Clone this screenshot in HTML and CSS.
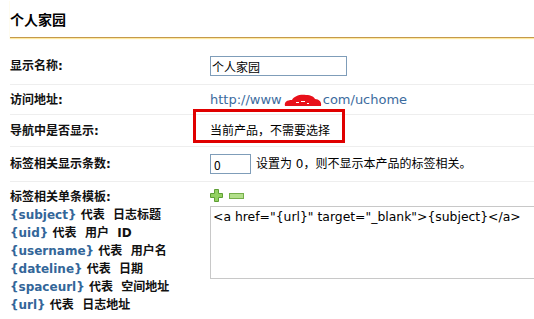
FILE: index.html
```html
<!DOCTYPE html>
<html lang="zh-CN">
<head>
<meta charset="utf-8">
<title>个人家园</title>
<link rel="stylesheet" href="styles.css">
</head>
<body>
<div class="page">
  <h1 class="title">个人家园</h1>
  <div class="form">
    <div class="row row-name">
      <div class="label">显示名称:</div>
      <div class="value"><input class="text name-input" type="text" value="个人家园"></div>
    </div>
    <div class="row row-url">
      <div class="label">访问地址:</div>
      <div class="value"><a class="link" href="#">http://www<svg class="blot" width="38" height="14" viewBox="0 0 38 14"><path d="M1 13 C0 9 3 7 8 7 C10 3 16 1 22 2 C27 2 30 4 31 6 C35 6 38 9 37 13 Z" fill="#e8101a"/><rect x="12" y="9" width="3" height="1" fill="#fff"/><rect x="17" y="8" width="4" height="1" fill="#fff"/><rect x="23" y="10" width="2" height="1" fill="#fff"/></svg>com/uchome</a></div>
    </div>
    <div class="row row-nav">
      <div class="label">导航中是否显示:</div>
      <div class="value"><span class="hl">当前产品，不需要选择</span></div>
    </div>
    <div class="row row-count">
      <div class="label">标签相关显示条数:</div>
      <div class="value"><input class="text count-input" type="text" value="0"><span class="hint">设置为 0，则不显示本产品的标签相关。</span></div>
    </div>
    <div class="row row-tpl">
      <div class="label">
        <div>标签相关单条模板:</div>
        <div><span class="var">{subject}</span> 代表 &nbsp;日志标题</div>
        <div><span class="var">{uid}</span> 代表 &nbsp;用户 &nbsp;ID</div>
        <div><span class="var">{username}</span> 代表 &nbsp;用户名</div>
        <div><span class="var">{dateline}</span> 代表 &nbsp;日期</div>
        <div><span class="var">{spaceurl}</span> 代表 &nbsp;空间地址</div>
        <div><span class="var">{url}</span> 代表 &nbsp;日志地址</div>
      </div>
      <div class="value tpl-value">
        <div class="tools">
          <svg class="icon" width="13" height="13" viewBox="0 0 13 13"><polygon points="4.5,0.5 8.5,0.5 8.5,4.5 12.5,4.5 12.5,8.5 8.5,8.5 8.5,12.5 4.5,12.5 4.5,8.5 0.5,8.5 0.5,4.5 4.5,4.5" fill="#93d160" stroke="#5e9e35"/></svg>
          <svg class="icon" width="15" height="6" viewBox="0 0 15 6"><rect x="0.5" y="0.5" width="14" height="5" fill="#b2df8a" stroke="#75ae4a"/></svg>
        </div>
        <textarea class="tpl">&lt;a href="{url}" target="_blank"&gt;{subject}&lt;/a&gt;</textarea>
      </div>
    </div>
  </div>
</div>
</body>
</html>
```

FILE: styles.css
```css
html, body {
  margin: 0;
  padding: 0;
  background: #fff;
  overflow: hidden;
}

body {
  font-family: "DejaVu Sans", "Noto Sans CJK SC", sans-serif;
  font-size: 12px;
  color: #000;
}

.page {
  margin-left: 10px;
}

.title {
  margin: 0;
  padding: 11px 0 9px;
  font-family: "Noto Sans CJK SC", sans-serif;
  font-size: 14px;
  line-height: 17px;
  font-weight: bold;
  border-bottom: 1px solid #c49a4c;
  box-shadow: 0 1px 1px #ffe9a0;
}

.form {
  margin-top: 10px;
}

.row {
  display: grid;
  grid-template-columns: 200px 1fr;
  align-items: center;
  line-height: 18px;
  border-bottom: 1px solid #eeeeee;
}

.row-name { padding: 8px 0; }
.row-url { padding: 6px 0 5px; }
.row-nav { padding: 6px 0; }
.row-count { padding: 7px 0; }
.row-tpl {
  padding: 6px 0 0;
  align-items: start;
  border-bottom: none;
}

.label {
  font-weight: bold;
  color: #111;
}

.var {
  color: #336699;
  font-weight: bold;
}

.text {
  box-sizing: border-box;
  height: 20px;
  margin: 0;
  padding: 0 1px;
  border: 1px solid #7f9db9;
  font-family: "Noto Sans CJK SC", sans-serif;
  font-size: 12px;
  color: #000;
  vertical-align: middle;
  background: #fff;
}

.name-input { width: 137px; }
.count-input { width: 41px; padding: 0 3px; }

.hint {
  margin-left: 5px;
  vertical-align: middle;
}

.link {
  color: #3b6b9e;
  text-decoration: none;
  font-size: 13px;
}

.blot {
  vertical-align: -3px;
  margin: 0 1px 0 2px;
}

.hl {
  position: relative;
  display: inline-block;
  font-family: "Noto Sans CJK SC", sans-serif;
}

.hl::after {
  content: "";
  position: absolute;
  left: -17px;
  right: -15px;
  top: -12px;
  bottom: -4px;
  border: 3px solid #e00000;
}

.tools {
  display: flex;
  align-items: center;
  gap: 6px;
  height: 13px;
  padding-top: 1px;
  margin-bottom: 4px;
}

.icon {
  display: block;
}

.tpl {
  display: block;
  box-sizing: border-box;
  width: 340px;
  height: 73px;
  margin: 0;
  padding: 2px;
  border: 1px solid #c8c8c8;
  font-family: "DejaVu Sans", sans-serif;
  font-size: 12.4px;
  line-height: 16px;
  color: #000;
  resize: none;
}
```
